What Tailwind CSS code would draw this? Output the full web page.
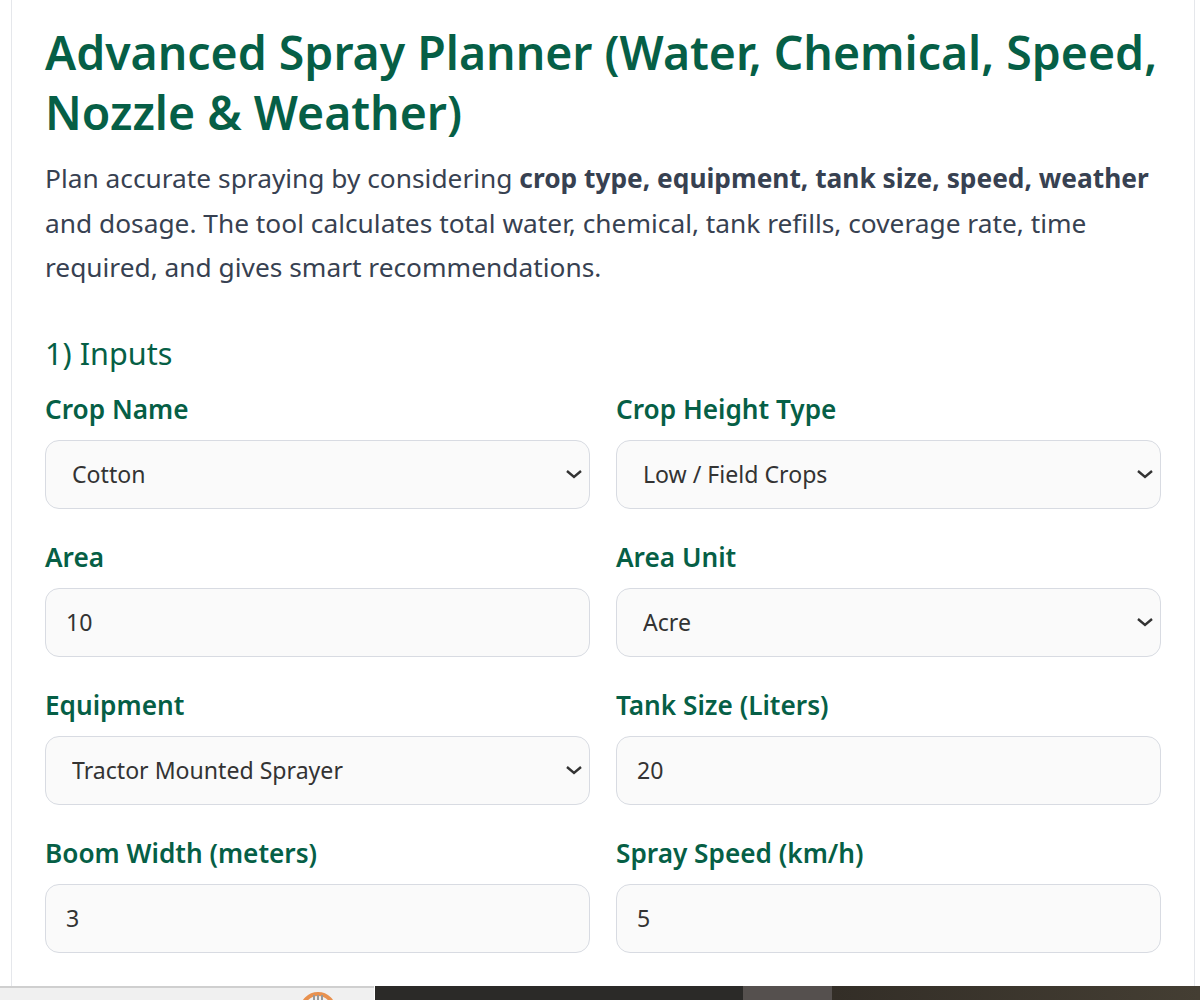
<!DOCTYPE html>
<html lang="en">
<head>
    <meta charset="UTF-8">
    <meta name="viewport" content="width=device-width, initial-scale=1.0">
    <title>Advanced Spray Planner</title>
    <script src="https://cdn.jsdelivr.net/npm/@tailwindcss/browser@4"></script>
</head>
<body class="bg-white font-['Noto_Sans',sans-serif] overflow-hidden">
    <div class="flex flex-col h-[1000px]">
        <!-- Card -->
        <main class="h-[986px] overflow-hidden ml-[11px] mr-[5px] px-[33px] border-x border-[#e5e7eb]">
            <h1 class="mt-[22px] text-[46.4px] leading-[60px] font-semibold text-[#065f46]">Advanced Spray Planner (Water, Chemical, Speed, Nozzle &amp; Weather)</h1>
            <p class="mt-[14px] text-[26.3px] leading-[44.5px] text-[#374151]">Plan accurate spraying by considering <strong class="font-bold">crop type, equipment, tank size, speed, weather</strong> and dosage. The tool calculates total water, chemical, tank refills, coverage rate, time required, and gives smart recommendations.</p>
            <h2 class="mt-[41px] text-[30.6px] leading-[44px] font-normal text-[#065f46]">1) Inputs</h2>

            <!-- Inputs -->
            <div class="grid grid-cols-2 gap-x-[26px] gap-y-[29px] mt-[15px]">
                <div>
                    <label class="block text-[26.2px] leading-[38px] font-semibold text-[#065f46]">Crop Name</label>
                    <div class="relative mt-[12px]">
                        <select class="appearance-none w-full h-[69px] pl-[26px] bg-[#fafafa] border border-[#d8dbe2] rounded-[14px] text-[23.1px] text-[#333]">
                            <option>Cotton</option>
                        </select>
                        <svg class="absolute right-[7px] top-[27px] w-[18px] h-[14px] text-[#333]" viewBox="0 0 18 14" fill="none" stroke="currentColor" stroke-width="2.4"><path d="M2 4l7 6 7-6"/></svg>
                    </div>
                </div>
                <div>
                    <label class="block text-[26.2px] leading-[38px] font-semibold text-[#065f46]">Crop Height Type</label>
                    <div class="relative mt-[12px]">
                        <select class="appearance-none w-full h-[69px] pl-[26px] bg-[#fafafa] border border-[#d8dbe2] rounded-[14px] text-[23.1px] text-[#333]">
                            <option>Low / Field Crops</option>
                        </select>
                        <svg class="absolute right-[7px] top-[27px] w-[18px] h-[14px] text-[#333]" viewBox="0 0 18 14" fill="none" stroke="currentColor" stroke-width="2.4"><path d="M2 4l7 6 7-6"/></svg>
                    </div>
                </div>
                <div>
                    <label class="block text-[26.2px] leading-[38px] font-semibold text-[#065f46]">Area</label>
                    <input class="block mt-[12px] w-full h-[69px] px-[20px] bg-[#fafafa] border border-[#d8dbe2] rounded-[14px] text-[23.1px] text-[#333]" value="10">
                </div>
                <div>
                    <label class="block text-[26.2px] leading-[38px] font-semibold text-[#065f46]">Area Unit</label>
                    <div class="relative mt-[12px]">
                        <select class="appearance-none w-full h-[69px] pl-[26px] bg-[#fafafa] border border-[#d8dbe2] rounded-[14px] text-[23.1px] text-[#333]">
                            <option>Acre</option>
                        </select>
                        <svg class="absolute right-[7px] top-[27px] w-[18px] h-[14px] text-[#333]" viewBox="0 0 18 14" fill="none" stroke="currentColor" stroke-width="2.4"><path d="M2 4l7 6 7-6"/></svg>
                    </div>
                </div>
                <div>
                    <label class="block text-[26.2px] leading-[38px] font-semibold text-[#065f46]">Equipment</label>
                    <div class="relative mt-[12px]">
                        <select class="appearance-none w-full h-[69px] pl-[26px] bg-[#fafafa] border border-[#d8dbe2] rounded-[14px] text-[23.1px] text-[#333]">
                            <option>Tractor Mounted Sprayer</option>
                        </select>
                        <svg class="absolute right-[7px] top-[27px] w-[18px] h-[14px] text-[#333]" viewBox="0 0 18 14" fill="none" stroke="currentColor" stroke-width="2.4"><path d="M2 4l7 6 7-6"/></svg>
                    </div>
                </div>
                <div>
                    <label class="block text-[26.2px] leading-[38px] font-semibold text-[#065f46]">Tank Size (Liters)</label>
                    <input class="block mt-[12px] w-full h-[69px] px-[20px] bg-[#fafafa] border border-[#d8dbe2] rounded-[14px] text-[23.1px] text-[#333]" value="20">
                </div>
                <div>
                    <label class="block text-[26.2px] leading-[38px] font-semibold text-[#065f46]">Boom Width (meters)</label>
                    <input class="block mt-[12px] w-full h-[69px] px-[20px] bg-[#fafafa] border border-[#d8dbe2] rounded-[14px] text-[23.1px] text-[#333]" value="3">
                </div>
                <div>
                    <label class="block text-[26.2px] leading-[38px] font-semibold text-[#065f46]">Spray Speed (km/h)</label>
                    <input class="block mt-[12px] w-full h-[69px] px-[20px] bg-[#fafafa] border border-[#d8dbe2] rounded-[14px] text-[23.1px] text-[#333]" value="5">
                </div>
            </div>
        </main>

        <!-- Bottom strip -->
        <div class="flex h-[14px] shrink-0">
            <div class="w-[374px] bg-[#f0f0f0] border-t-2 border-[#cfcfcf] overflow-hidden pl-[299px]">
                <svg class="w-[38px] h-[38px] mt-[3px]" viewBox="0 0 38 38" fill="none"><circle cx="19" cy="19" r="16" stroke="#e8914f" stroke-width="4"/><path d="M15 4v14M19 4v14M23 4v14" stroke="#999" stroke-width="2"/></svg>
            </div>
            <div class="w-[369px] bg-[#2b2a28] border-l border-white"></div>
            <div class="w-[89px] bg-[#55504e]"></div>
            <div class="flex-1 bg-gradient-to-r from-[#332e27] to-[#443e33]"></div>
        </div>
    </div>
</body>
</html>
